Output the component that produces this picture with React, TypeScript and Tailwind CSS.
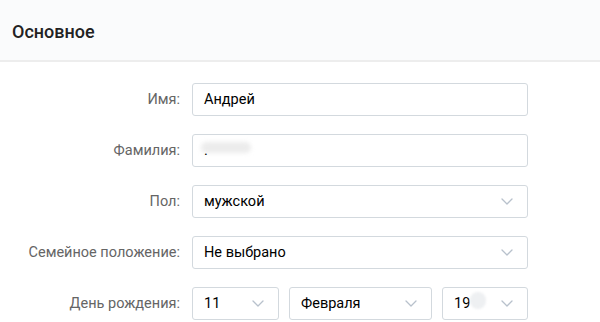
import React from 'react';

const font = { fontFamily: 'Roboto, "Noto Sans", Arial, sans-serif' };

function Chevron() {
  return (
    <svg width="12" height="7" viewBox="0 0 12 7" fill="none" className="shrink-0">
      <path d="M1 1l5 5 5-5" stroke="#b8c1cc" strokeWidth="1.3" strokeLinecap="round" strokeLinejoin="round" />
    </svg>
  );
}

function Field({ children, select, className = '' }: { children: React.ReactNode; select?: boolean; className?: string }) {
  return (
    <div
      className={
        'h-[33px] flex items-center justify-between pl-[11px] pr-[14px] border border-[#d3d9de] rounded-[3px] bg-white text-[14.5px] text-black ' +
        className
      }
    >
      <span className="whitespace-nowrap">{children}</span>
      {select && <Chevron />}
    </div>
  );
}

function Row({ label, children }: { label: string; children: React.ReactNode }) {
  return (
    <div className="flex items-center">
      <div className="w-[192px] shrink-0 pr-[12px] text-right text-[14.5px] text-[#656565]">{label}</div>
      <div className="w-[336px] flex gap-[10px]">{children}</div>
    </div>
  );
}

export default function App() {
  return (
    <div className="w-[600px] h-[322px] bg-white overflow-hidden" style={font}>
      {/* Заголовок */}
      <div className="h-[62px] bg-[#fafbfc] border-b-2 border-[#ededed] flex items-center px-[12px] pt-[2px]">
        <span className="text-[18px] font-medium text-[#222]">Основное</span>
      </div>

      <div className="pt-[21px] flex flex-col gap-[18px]">
        <Row label="Имя:">
          <Field className="flex-1">Андрей</Field>
        </Row>
        <Row label="Фамилия:">
          <Field className="flex-1">
            <span className="relative inline-block">
              <span className="absolute left-[-3px] top-[2px] w-[50px] h-[11px] rounded-full bg-[#ececec] blur-[2px]" />
              <span className="relative">.</span>
            </span>
          </Field>
        </Row>
        <Row label="Пол:">
          <Field select className="flex-1">мужской</Field>
        </Row>
        <Row label="Семейное положение:">
          <Field select className="flex-1">Не выбрано</Field>
        </Row>
        <Row label="День рождения:">
          <Field select className="w-[87px]">11</Field>
          <Field select className="w-[143px]">Февраля</Field>
          <Field select className="flex-1">
            <span className="relative inline-block">
              19
              <span className="absolute left-[16px] top-[-1px] w-[16px] h-[17px] rounded-full bg-[#eef0f2] blur-[1px]" />
            </span>
          </Field>
        </Row>
      </div>
    </div>
  );
}
